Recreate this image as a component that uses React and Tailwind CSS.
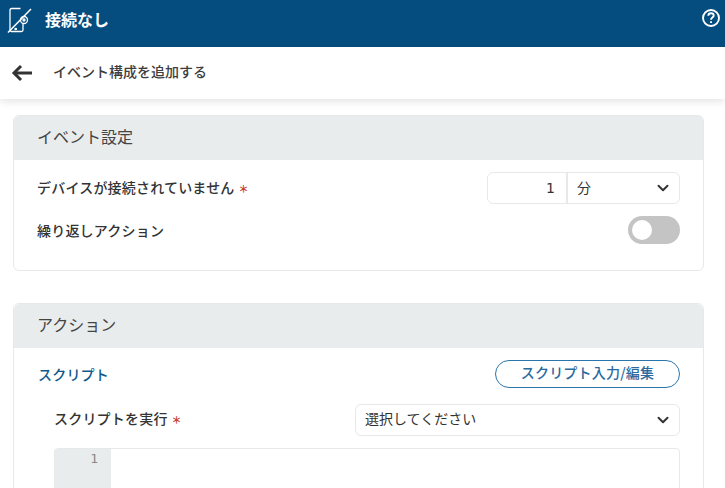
import React from "react";
import { ChevronDown } from "lucide-react";

const font = "font-['Noto_Sans_CJK_JP','Roboto',sans-serif]";

const Required = () => <span className="ml-[4px] text-[10px] font-bold text-[#c9402f]">＊</span>;

const PhoneOff = () => (
  <svg width="28" height="34" viewBox="0 0 28 34" fill="none" stroke="white" strokeWidth="1.3">
    <path d="M14.500 5.500H5.500C4.600 5.500 4 6.100 4 7V27C4 27.900 4.600 28.500 5.500 28.500H15.500C16.400 28.500 17 27.900 17 27V21" />
    <path d="M2 29.500L25 6" strokeWidth="1.500" />
    <circle cx="18" cy="17" r="3.500" />
    <circle cx="18" cy="17" r="1" />
    <circle cx="9.700" cy="26" r="0.700" fill="white" />
  </svg>
);

const BackArrow = () => (
  <svg width="22" height="18" viewBox="0 0 22 18" fill="none" stroke="#333" strokeWidth="3">
    <path d="M21 9H3" />
    <path d="M10 2L3 9L10 16" />
  </svg>
);

const HelpIcon = () => (
  <svg width="20" height="20" viewBox="0 0 20 20" fill="none" stroke="white" strokeWidth="1.900">
    <circle cx="10" cy="10" r="8" />
    <path d="M7.300 7.800C7.300 6.200 8.500 5.300 10 5.300C11.600 5.300 12.700 6.300 12.700 7.600C12.700 9.600 10 9.500 10 11.700" />
    <path d="M10 13.300V15" />
  </svg>
);

export default function App() {
  return (
    <div className={`h-[488px] w-[725px] overflow-hidden bg-white text-[#333] ${font}`}>
      {/* HEADER */}
      <div className="flex h-[47px] items-center justify-between bg-[#054d7f] pb-[7px] pl-[6px] pr-[4px] text-white">
        <div className="flex items-center gap-[11px]">
          <PhoneOff />
          <span className="pb-[2px] text-[16px] font-bold">接続なし</span>
        </div>
        <div className="mb-[4px]">
          <HelpIcon />
        </div>
      </div>

      {/* TITLE */}
      <div className="flex h-[52px] items-center bg-white pl-[11px] shadow-[0_2px_8px_rgba(0,0,0,0.12)]">
        <BackArrow />
        <span className="ml-[20px] pb-[3px] text-[14px] font-medium text-[#3d3d3d]">イベント構成を追加する</span>
      </div>

      <div className="pl-[13px] pr-[21px] pt-[16px]">
        {/* EVENT SETTINGS */}
        <div className="h-[156px] overflow-hidden rounded-[6px] border border-[#e6e8ea]">
          <div className="flex h-[44px] items-center bg-[#e9eced] px-[23px] pb-[4px] text-[16px] text-[#444]">イベント設定</div>
          <div className="flex items-center justify-between pl-[23px] pr-[23px] pt-[12px]">
            <span className="pb-[2px] text-[14px] font-medium tracking-[0.2px]">デバイスが接続されていません<Required /></span>
            <div className="flex h-[32px] w-[193px] rounded-[6px] border border-[#e6e8ea] text-[14px]">
              <div className="flex w-[80px] items-center justify-end border-r-2 border-[#e6e8ea] pr-[11px] font-['DejaVu_Sans',sans-serif] text-[14px]">1</div>
              <div className="flex flex-1 items-center justify-between pl-[9px] pr-[7px]">
                <span className="pb-[2px]">分</span>
                <ChevronDown size={18} strokeWidth={2.600} />
              </div>
            </div>
          </div>
          <div className="flex items-center justify-between pl-[23px] pr-[23px] pt-[12px]">
            <span className="text-[14px] font-medium tracking-[0.2px]">繰り返しアクション</span>
            <div className="flex h-[28px] w-[52px] items-center rounded-full bg-[#c4c4c4] pl-[4px]">
              <div className="h-[20px] w-[20px] rounded-full bg-white" />
            </div>
          </div>
        </div>

        {/* ACTION */}
        <div className="mt-[32px] h-[300px] rounded-[6px] border border-[#e6e8ea]">
          <div className="flex h-[44px] items-center rounded-t-[6px] bg-[#e9eced] px-[23px] pb-[4px] text-[16px] text-[#444]">アクション</div>
          <div className="flex items-center justify-between pl-[24px] pr-[23px] pt-[12px]">
            <span className="text-[14px] font-medium tracking-[0.2px] text-[#0f5a8c]">スクリプト</span>
            <button className="flex h-[28px] w-[185px] items-center justify-center rounded-full border border-[#2a75ab] pb-[3px] text-[14px] font-medium tracking-[0.2px] text-[#2a6a9e]">
              スクリプト入力/編集
            </button>
          </div>
          <div className="flex items-center justify-between pl-[40px] pr-[23px] pt-[16px]">
            <span className="pb-[4px] text-[14px] font-medium tracking-[0.2px]">スクリプトを実行<Required /></span>
            <div className="flex h-[32px] w-[325px] items-center justify-between rounded-[6px] border border-[#e6e8ea] pl-[9px] pr-[7px] text-[14px]">
              <span className="pb-[3px]">選択してください</span>
              <ChevronDown size={18} strokeWidth={2.600} />
            </div>
          </div>
          <div className="ml-[40px] mr-[23px] mt-[12px] flex h-[60px] rounded-t-[4px] border border-[#e6e8ea]">
            <div className="w-[56px] bg-[#e9eced] pr-[13px] text-right font-['DejaVu_Sans_Mono',monospace] text-[13px] text-[#888]">1</div>
          </div>
        </div>
      </div>
    </div>
  );
}
